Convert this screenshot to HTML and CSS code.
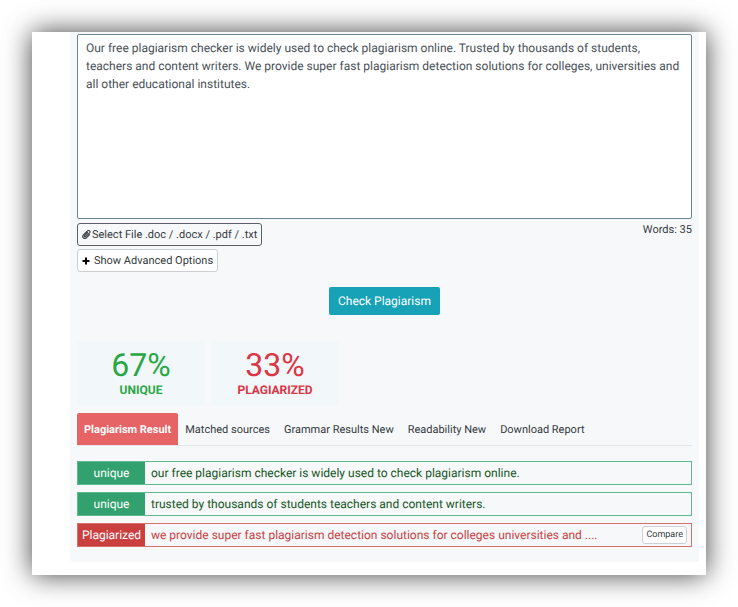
FILE: index.html
```html
<!DOCTYPE html>
<html lang="en">
<head>
<meta charset="utf-8">
<meta name="viewport" content="width=device-width, initial-scale=1">
<title>Plagiarism Checker</title>
<link rel="stylesheet" href="styles.css">
</head>
<body>
<main class="sheet">
  <div class="panel">
    <textarea class="editor" aria-label="Text to check" spellcheck="false">Our free plagiarism checker is widely used to check plagiarism online. Trusted by thousands of students, teachers and content writers. We provide super fast plagiarism detection solutions for colleges, universities and all other educational institutes.</textarea>
    <div class="toolbar">
      <div class="tools">
        <button type="button" class="btn btn-file">
          <svg class="clip" viewBox="0 0 16 16" aria-hidden="true"><path d="M10.500 4 4.500 10a1.200 1.200 0 0 0 1.800 1.800L13.500 5a2.400 2.400 0 0 0-3.600-3.400L2.500 8.800a3.600 3.600 0 0 0 5.200 5.200L14 7.800"/></svg>
          <span>Select File .doc / .docx / .pdf / .txt</span>
        </button>
        <button type="button" class="btn btn-options">
          <svg class="plus" viewBox="0 0 8 8" aria-hidden="true"><path d="M4 0.500v7M0.500 4h7"/></svg>
          <span>Show Advanced Options</span>
        </button>
      </div>
      <span class="words">Words: 35</span>
    </div>
    <button type="button" class="btn-check">Check Plagiarism</button>
    <div class="stats">
      <div class="stat good"><span class="percent">67%</span><span class="label">UNIQUE</span></div>
      <div class="stat bad"><span class="percent">33%</span><span class="label">PLAGIARIZED</span></div>
    </div>
    <nav class="tabs">
      <a href="#result" class="tab active">Plagiarism Result</a>
      <a href="#sources" class="tab">Matched sources</a>
      <a href="#grammar" class="tab">Grammar Results New</a>
      <a href="#readability" class="tab">Readability New</a>
      <a href="#report" class="tab">Download Report</a>
    </nav>
    <div class="results" id="result">
      <div class="row unique"><span class="badge">unique</span><span class="sentence">our free plagiarism checker is widely used to check plagiarism online.</span></div>
      <div class="row unique"><span class="badge">unique</span><span class="sentence">trusted by thousands of students teachers and content writers.</span></div>
      <div class="row copied"><span class="badge">Plagiarized</span><span class="sentence">we provide super fast plagiarism detection solutions for colleges universities and ....</span><button type="button" class="compare">Compare</button></div>
    </div>
  </div>
</main>
</body>
</html>
```
FILE: styles.css
```css
* {
  box-sizing: border-box;
}

body {
  margin: 0;
  padding: 32px;
  background: #fff;
  color: #343a40;
  font: 12px/18px Roboto, "Liberation Sans", sans-serif;
  text-rendering: geometricPrecision;
}

button,
textarea {
  font: inherit;
  color: inherit;
  text-rendering: inherit;
}

.sheet {
  padding: 0 7px 13px 38px;
  background: #fff;
  box-shadow: 0 0 26px rgba(0, 0, 0, 0.75);
}

.panel {
  padding: 2px 7px 15px;
  border-radius: 0 0 3px 3px;
  background: #f7f8fa;
}

.editor {
  display: block;
  width: 100%;
  height: 185px;
  padding: 4px 8px;
  border: 1px solid #6c8490;
  border-radius: 2px;
  background: #fff;
  color: #495057;
  resize: none;
}

.toolbar {
  display: flex;
  justify-content: space-between;
  align-items: flex-start;
  margin-top: 4px;
}

.tools {
  display: flex;
  flex-direction: column;
  align-items: flex-start;
  gap: 3px;
}

.btn {
  display: flex;
  align-items: center;
  height: 23px;
  padding: 0 4px;
  border: 1px solid #ccd0d4;
  border-radius: 3px;
  background: #fff;
  font-size: 11px;
  line-height: 16px;
}

.btn-file {
  gap: 1px;
  border-color: #5b6066;
  background: transparent;
}

.btn-options {
  gap: 4px;
}

.clip {
  width: 9px;
  height: 9px;
  fill: none;
  stroke: #343a40;
  stroke-width: 2;
}

.plus {
  width: 8px;
  height: 8px;
  fill: none;
  stroke: #000;
  stroke-width: 2;
}

.words {
  font-size: 11px;
  line-height: 14px;
}

.btn-check {
  display: block;
  height: 28px;
  margin: 15px auto 0;
  padding: 0 9px;
  border: 0;
  border-radius: 2px;
  background: #17a2b8;
  color: #fff;
}

.stats {
  display: flex;
  gap: 6px;
  margin-top: 26px;
}

.stat {
  display: flex;
  flex-direction: column;
  align-items: center;
  width: 128px;
  height: 65px;
  padding-top: 8px;
  border-radius: 3px;
  background: #f2f7fa;
}

.percent {
  font-size: 32px;
  line-height: 32px;
}

.label {
  font-weight: 700;
}

.good {
  color: #28a745;
}

.bad {
  color: #dc3545;
}

.tabs {
  display: flex;
  margin-top: 7px;
  border-bottom: 1px solid #e3e6ea;
}

.tab {
  padding: 9px 7px 7px;
  border-radius: 2px 2px 0 0;
  color: #343a40;
  font-size: 11px;
  line-height: 16px;
  text-decoration: none;
}

.active {
  background: #e66465;
  color: #fff;
  font-weight: 700;
}

.results {
  display: flex;
  flex-direction: column;
  gap: 7px;
  margin-top: 15px;
}

.row {
  display: flex;
  align-items: center;
  height: 24px;
  border: 1px solid;
}

.badge {
  align-self: stretch;
  flex: none;
  width: 67px;
  line-height: 22px;
  text-align: center;
  color: #fff;
}

.sentence {
  flex: 1;
  padding-left: 6px;
}

.unique {
  border-color: #60b991;
  color: #155724;
}

.unique .badge {
  background: #33a06f;
}

.copied {
  border-color: #d9706e;
  color: #c9403f;
}

.copied .badge {
  background: #c9403f;
}

.compare {
  height: 18px;
  margin-right: 4px;
  padding: 0 3px;
  border: 1px solid #ccd0d4;
  border-radius: 3px;
  background: #fff;
  color: #343a40;
  font-size: 9px;
  line-height: 14px;
}
```
